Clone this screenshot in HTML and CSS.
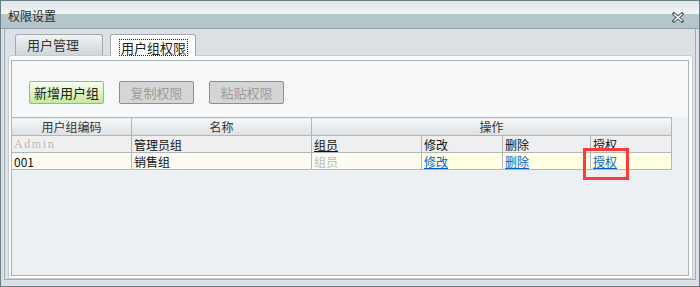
FILE: index.html
```html
<!DOCTYPE html>
<html lang="zh-CN">
<head>
  <meta charset="UTF-8" />
  <title>权限设置</title>
  <link rel="stylesheet" href="styles.css">
</head>
<body>
  <div class="window">
    <div class="titlebar">
      <span class="title">权限设置</span>
      <svg class="close" width="12" height="11" viewBox="0 0 12 11">
        <path d="M2 2 L10 9 M10 2 L2 9" stroke="#5a5f63" stroke-width="3.4" stroke-linecap="square" fill="none"/>
        <path d="M2 2 L10 9 M10 2 L2 9" stroke="#fff" stroke-width="1.4" fill="none"/>
      </svg>
    </div>

    <div class="body">
      <div class="frame">
        <!-- tabs -->
        <div class="tabs">
          <div class="tab">用户管理</div>
          <div class="tab active"><span class="focus">用户组权限</span></div>
        </div>

        <div class="panel">
          <div class="content">
            <div class="toolbar">
              <button class="btn btn-add">新增用户组</button>
              <button class="btn" disabled>复制权限</button>
              <button class="btn" disabled>粘贴权限</button>
            </div>

            <table class="grid">
              <colgroup>
                <col class="c-code">
                <col class="c-name">
                <col class="c-member">
                <col class="c-op1">
                <col class="c-op2">
                <col class="c-op3">
              </colgroup>
              <tr class="head">
                <th>用户组编码</th>
                <th>名称</th>
                <th colspan="4">操作</th>
              </tr>
              <tr class="sub">
                <td class="admin">Admin</td>
                <td>管理员组</td>
                <td><u>组员</u></td>
                <td>修改</td>
                <td>删除</td>
                <td>授权</td>
              </tr>
              <tr class="row">
                <td>001</td>
                <td>销售组</td>
                <td class="muted">组员</td>
                <td class="op"><a href="#">修改</a></td>
                <td class="op"><a href="#">删除</a></td>
                <td class="op"><a href="#">授权</a></td>
              </tr>
            </table>
          </div>
        </div>
      </div>
    </div>

    <!-- highlight box over the 授权 link -->
    <div class="mark"></div>
  </div>
</body>
</html>
```

FILE: styles.css
```css
body {
  margin: 0;
  background: #fff;
  font-family: "Noto Sans CJK SC", "Liberation Sans", sans-serif;
  color: #222;
}

.window {
  position: relative;
  width: 700px;
  height: 287px;
  box-sizing: border-box;
  border: 1px solid #6b7e86;
  background: #dcdfe3;
}

.titlebar {
  height: 28px;
  box-sizing: border-box;
  border-bottom: 1px solid #8d9ea4;
  background: linear-gradient(#dfe6e9 0, #f2f5f6 13px, #b6c7cc 13px, #b3c5ca 100%);
  display: flex;
  align-items: center;
  justify-content: space-between;
  padding: 3px 15px 0 7px;
}

.title {
  font-size: 12px;
  line-height: 16px;
  color: #2d2d2d;
}

.close {
  display: block;
  margin-top: 2px;
}

.body {
  padding: 0 3px;
}

.frame {
  height: 251px;
  box-sizing: border-box;
  border: 1px solid #a2acb1;
  border-top: none;
  padding: 5px 2px 0 3px;
}

/* tabs */
.tabs {
  display: flex;
  align-items: flex-start;
  gap: 7px;
  height: 21px;
  margin-left: 7px;
}

.tab {
  width: 88px;
  height: 21px;
  box-sizing: border-box;
  border: 1px solid #a3abb0;
  border-bottom: none;
  border-radius: 3px 3px 0 0;
  background: linear-gradient(#f1f3f4, #cfd5d8);
  font-size: 13px;
  line-height: 20px;
  padding-left: 11px;
  color: #333;
}

.tab.active {
  position: relative;
  z-index: 1;
  width: 86px;
  height: 22px;
  background: #fff;
  padding: 3px 0 0 9px;
}

.focus {
  display: inline-block;
  padding: 0 1px;
  line-height: 15px;
  outline: 1px dotted #222;
  color: #222;
}

.panel {
  height: 224px;
  box-sizing: border-box;
  border: 1px solid #c5cbce;
  border-radius: 3px 3px 0 0;
  background: #fcfdfd;
  padding: 4px 3px 2px 2px;
}

.content {
  height: 100%;
  box-sizing: border-box;
  border: 1px solid #a9b1b5;
  background: #edf0f3;
}

.toolbar {
  height: 56px;
  box-sizing: border-box;
  background: #f6f7f9;
  padding: 20px 0 0 17px;
  display: flex;
  align-items: flex-start;
  gap: 15px;
}

.btn {
  width: 75px;
  height: 23px;
  box-sizing: border-box;
  padding: 0;
  border: 1px solid #8e8e8e;
  border-radius: 2px;
  background: #d5d5d5;
  color: #9d9d9d;
  font: 13px "Noto Sans CJK SC", sans-serif;
}

.btn-add {
  border-color: #8dc65d;
  background: linear-gradient(#f6fdee, #c4ea9b);
  color: #222;
}

/* grid */
.grid {
  border-collapse: collapse;
  table-layout: fixed;
  width: 661px;
  margin-left: -1px;
  font-size: 12px;
}

.c-code { width: 120px; }
.c-name { width: 180px; }
.c-member { width: 110px; }
.c-op1 { width: 81px; }
.c-op2 { width: 88px; }
.c-op3 { width: 81px; }

.grid th,
.grid td {
  border: 1px solid #b0b7bb;
  padding: 0 0 0 2px;
  white-space: nowrap;
  overflow: hidden;
  line-height: 15px;
}

.grid th {
  font-weight: normal;
  color: #333;
  padding: 0;
  background: linear-gradient(#f6f7f8, #dde1e4);
}

.head { height: 18px; }
.sub, .row { height: 17px; }

.sub td {
  background: #efefef;
  color: #111;
}

.row td {
  background: #fbfbf1;
  color: #111;
}

.row td.op {
  background: #ffffe3;
}

.admin {
  font-family: "Liberation Serif", serif;
  font-size: 12px;
  letter-spacing: 1.6px;
  color: #b8b8b8 !important;
}

.muted {
  color: #bbb !important;
}

.grid a {
  color: #0a5fd0;
  text-decoration: underline;
}

.mark {
  position: absolute;
  left: 582px;
  top: 147px;
  width: 46px;
  height: 32px;
  box-sizing: border-box;
  border: 3px solid #ff3a3a;
}
```
